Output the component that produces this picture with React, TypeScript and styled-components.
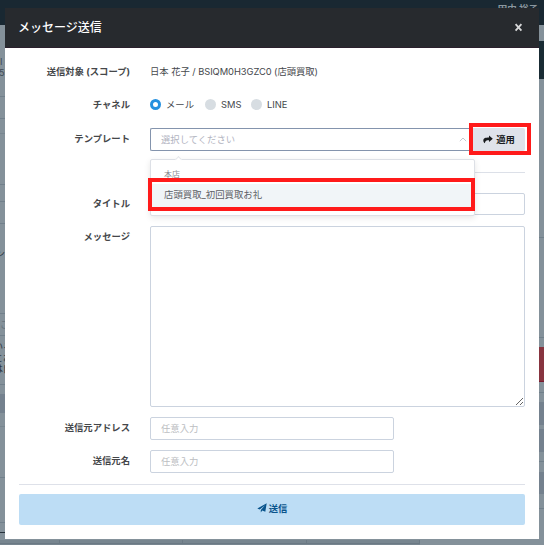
import React from 'react';
import styled, { createGlobalStyle, css } from 'styled-components';

const GlobalStyle = createGlobalStyle`
  *, *::before, *::after { box-sizing: border-box; }
  body {
    margin: 0;
    overflow: hidden;
    font-family: Inter, "Noto Sans CJK JP", sans-serif;
    font-size: 9.33px;
    color: #45484c;
  }
  input, textarea, button { font: inherit; color: inherit; margin: 0; }
`;

const Page = styled.div`
  position: relative;
  height: 545px;
  overflow: hidden;
  background: #84919a;
`;

const TopBar = styled.div`
  height: 25px;
  padding: 2px 6px 0 0;
  background: #192832;
  color: #8b979f;
  font-size: 9.5px;
  font-weight: 700;
  line-height: 14px;
  text-align: right;
`;

const Backdrop = styled.div`
  display: flex;
  justify-content: space-between;
  height: 515px;
`;

const Strip = styled.div`
  width: 6px;
`;

const Band = styled.div<{ $h: number; $bg?: string; $line?: string }>`
  height: ${(p) => p.$h}px;
  background: ${(p) => p.$bg || 'transparent'};
  border-bottom: ${(p) => (p.$line ? `1px solid ${p.$line}` : '0')};
`;

const Snippet = styled.div<{ $top: number; $color?: string; $shift?: number }>`
  padding-top: ${(p) => p.$top}px;
  margin-left: ${(p) => p.$shift || 0}px;
  color: ${(p) => p.$color || '#3e4a54'};
  font-size: 9px;
  line-height: 11px;
  white-space: nowrap;
`;

const TableEdge = styled.div`
  display: grid;
  grid-template-columns: 60px 123px 124px 113px;
  width: 420px;
  height: 5px;
  background: #77858f;
`;

const TableCell = styled.div`
  height: 4px;
  border-right: 1px solid #6b7984;
  border-bottom: 1px solid #6b7984;
`;

const Dialog = styled.section`
  position: absolute;
  left: 5px;
  top: 8px;
  width: 534px;
  height: 531px;
  background: #fff;
`;

const Header = styled.header`
  display: flex;
  align-items: center;
  justify-content: space-between;
  height: 40px;
  padding: 0 16px 0 13px;
  background: #272a2e;
  border-bottom: 1px solid #2b202d;
`;

const Title = styled.h1`
  margin: 0;
  color: #fff;
  font-size: 12px;
  font-weight: 500;
  line-height: 18px;
`;

const CloseButton = styled.button`
  display: flex;
  padding: 0 0 1px;
  border: 0;
  background: none;
  color: #d7d8d9;
`;

const Form = styled.form`
  padding: 12px 14px 0 0;
`;

const Row = styled.div<{ $h?: number; $gap?: number }>`
  display: grid;
  grid-template-columns: 125px 375px;
  column-gap: 20px;
  height: ${(p) => p.$h || 23}px;
  margin-bottom: ${(p) => p.$gap ?? 10}px;
`;

const Label = styled.label<{ $line?: number }>`
  height: 23px;
  line-height: ${(p) => p.$line || 22}px;
  font-weight: 700;
  color: #45474a;
  text-align: right;
  white-space: nowrap;
`;

const Value = styled.div`
  line-height: 24px;
  letter-spacing: -0.05px;
`;

const fieldFrame = css`
  display: block;
  border: 1px solid #cbd3df;
  border-radius: 2px;
  background: #fff;
  outline: 0;
`;

const TextField = styled.input<{ $w: number; $h?: number }>`
  ${fieldFrame}
  width: ${(p) => p.$w}px;
  height: ${(p) => p.$h || 23}px;
  padding: 0 10px;
  &::placeholder { color: #bcbec2; opacity: 1; }
`;

const MessageField = styled.textarea`
  ${fieldFrame}
  width: 375px;
  height: 181px;
  resize: vertical;
`;

const RadioGroup = styled.div`
  display: flex;
  align-items: center;
  height: 23px;
`;

const RadioOption = styled.span<{ $w: number }>`
  display: flex;
  align-items: center;
  gap: 5px;
  width: ${(p) => p.$w}px;
  line-height: 20px;
  white-space: nowrap;
`;

const RadioMark = styled.span<{ $checked?: boolean }>`
  flex: none;
  width: 11px;
  height: 11px;
  border-radius: 50%;
  border: ${(p) => (p.$checked ? '3.5px solid #2490df' : '0')};
  background: ${(p) => (p.$checked ? '#fff' : '#d7dde2')};
`;

const SelectGroup = styled.div`
  position: relative;
  display: flex;
`;

const SelectBox = styled.div`
  display: flex;
  align-items: center;
  justify-content: space-between;
  width: 323px;
  height: 23px;
  padding: 0 6px 1px 10px;
  border: 1px solid #8494ad;
  border-right: 0;
  border-radius: 2px 0 0 2px;
  color: #b2b4bf;
`;

const ApplyButton = styled.button`
  display: flex;
  align-items: center;
  justify-content: center;
  gap: 3px;
  width: 52px;
  height: 23px;
  padding: 0 0 1px;
  border: 0;
  border-radius: 0 2px 2px 0;
  background: #dfe2ea;
  color: #181a1d;
  font-weight: 700;
`;

const Menu = styled.div`
  position: absolute;
  z-index: 2;
  top: 31px;
  left: 0;
  width: 325px;
  height: 57px;
  padding-top: 8px;
  border: 1px solid #dde0e6;
  border-radius: 2px;
  background: #fff;
  box-shadow: 0 2px 6px rgba(0, 0, 0, 0.1);
  &::before {
    content: '';
    position: absolute;
    top: -3px;
    left: 25px;
    width: 5px;
    height: 5px;
    border: solid #e6e8ec;
    border-width: 1px 0 0 1px;
    background: #fff;
    transform: rotate(45deg);
  }
`;

const MenuGroup = styled.div`
  height: 16px;
  padding-left: 13px;
  color: #888a90;
  font-size: 8px;
  line-height: 12px;
`;

const MenuItem = styled.div`
  height: 23px;
  padding-left: 13px;
  background: #f1f5f8;
  color: #5d6065;
  font-size: 9.4px;
  line-height: 22px;
`;

const Highlight = styled.div<{ $x: number; $y: number; $w: number; $h: number }>`
  position: absolute;
  z-index: 3;
  left: ${(p) => p.$x}px;
  top: ${(p) => p.$y}px;
  width: ${(p) => p.$w}px;
  height: ${(p) => p.$h}px;
  border: 4px solid #ff1a1a;
  pointer-events: none;
`;

const Divider = styled.hr`
  height: 1px;
  margin: 21px 0 20px 145px;
  border: 0;
  background: #dce0e8;
`;

const Footer = styled.footer`
  margin: 11px 14px 0;
  padding-top: 9px;
  border-top: 1px solid #dee1e9;
`;

const SendButton = styled.button`
  display: flex;
  align-items: center;
  justify-content: center;
  gap: 2px;
  width: 100%;
  height: 31px;
  padding: 0 0 3px;
  border: 0;
  border-radius: 2px;
  background: #bdddf5;
  color: #09548c;
  font-weight: 700;
`;

const LINE = '#71808b';

export default function App() {
  return (
    <>
      <GlobalStyle />
      <Page>
        <TopBar>田中 裕子</TopBar>
        <Backdrop>
          <Strip>
            <Band $h={72} $line={LINE}>
              <Snippet $top={31}>I</Snippet>
              <Snippet $top={0} $shift={-1}>59</Snippet>
            </Band>
            <Band $h={22} $line={LINE} />
            <Band $h={15} $line="#788690" />
            <Band $h={51} $line={LINE} />
            <Band $h={17} $line={LINE} />
            <Band $h={22} $line={LINE} />
            <Band $h={90} $line={LINE}>
              <Snippet $top={24} $shift={-4} $color="#27343e">ン</Snippet>
            </Band>
            <Band $h={22} $line={LINE}>
              <Snippet $top={5} $color="#65727c">こ</Snippet>
            </Band>
            <Band $h={49} $line={LINE}>
              <Snippet $top={5} $shift={-6} $color="#27343e">いる</Snippet>
              <Snippet $top={0} $shift={-6} $color="#27343e">とお</Snippet>
              <Snippet $top={0} $shift={-6} $color="#27343e">は自</Snippet>
            </Band>
            <Band $h={9} />
            <Band $h={19} $bg="#74818e" />
            <Band $h={14} $line="#788690" />
            <Band $h={51} $line={LINE} />
            <Band $h={45} $line={LINE} />
            <Band $h={10} $line="#26323b" />
            <Band $h={7} />
          </Strip>
          <Strip>
            <Band $h={16} />
            <Band $h={38} $bg="#192b34" />
            <Band $h={159} $line={LINE} />
            <Band $h={100} $line={LINE} />
            <Band $h={9} />
            <Band $h={35} $bg="#87343f" $line="#781c30" />
            <Band $h={11} $line={LINE} />
            <Band $h={9} />
            <Band $h={23} $bg="#74818e" />
            <Band $h={4} />
            <Band $h={23} $bg="#74818e" />
            <Band $h={10} $line={LINE} />
            <Band $h={10} />
            <Band $h={22} $bg="#74818e" />
            <Band $h={15} $line={LINE} />
          </Strip>
        </Backdrop>
        <TableEdge>
          <TableCell />
          <TableCell />
          <TableCell />
          <TableCell />
        </TableEdge>

        <Dialog role="dialog">
          <Header>
            <Title>メッセージ送信</Title>
            <CloseButton type="button" aria-label="閉じる">
              <svg width="9" height="9" viewBox="0 0 9 9" fill="none" stroke="currentColor" strokeWidth="1.8">
                <path d="M1.6 1.2 7.4 7.6M7.4 1.2 1.6 7.6" />
              </svg>
            </CloseButton>
          </Header>
          <Form onSubmit={(e) => e.preventDefault()}>
            <Row $gap={10}>
              <Label $line={24}>送信対象 (スコープ)</Label>
              <Value>日本 花子 / BSIQM0H3GZC0 (店頭買取)</Value>
            </Row>
            <Row $gap={12}>
              <Label $line={24}>チャネル</Label>
              <RadioGroup>
                <RadioOption $w={55}><RadioMark $checked />メール</RadioOption>
                <RadioOption $w={46}><RadioMark />SMS</RadioOption>
                <RadioOption $w={40}><RadioMark />LINE</RadioOption>
              </RadioGroup>
            </Row>
            <Row $gap={0}>
              <Label>テンプレート</Label>
              <SelectGroup>
                <SelectBox>
                  選択してください
                  <svg width="8" height="5" viewBox="0 0 8 5" fill="none" stroke="#c5c8cf">
                    <path d="M.8 4.2 4 1l3.200 3.200" />
                  </svg>
                </SelectBox>
                <ApplyButton type="button">
                  <svg width="10" height="9" viewBox="0 0 10 9" fill="currentColor">
                    <path d="M6 .6 9.800 3.800 6 7V5.200C3.600 5.200 2.200 5.700 1.800 8.300.9 7.600.3 6.700.3 5.500.3 3 2.600 2.400 6 2.400Z" />
                  </svg>
                  適用
                </ApplyButton>
                <Menu>
                  <MenuGroup>本店</MenuGroup>
                  <MenuItem>店頭買取_初回買取お礼</MenuItem>
                </Menu>
                <Highlight $x={-2} $y={50} $w={327} $h={33} />
                <Highlight $x={319} $y={-5} $w={62} $h={32} />
              </SelectGroup>
            </Row>
            <Divider />
            <Row $h={22} $gap={11}>
              <Label>タイトル</Label>
              <TextField $w={375} $h={22} />
            </Row>
            <Row $h={181}>
              <Label>メッセージ</Label>
              <MessageField />
            </Row>
            <Row>
              <Label>送信元アドレス</Label>
              <TextField $w={244} placeholder="任意入力" />
            </Row>
            <Row $gap={0}>
              <Label>送信元名</Label>
              <TextField $w={244} placeholder="任意入力" />
            </Row>
          </Form>
          <Footer>
            <SendButton type="button">
              <svg width="10" height="10" viewBox="0 0 10 10" fill="currentColor">
                <path d="M9.700.3 8.300 8.700 5.200 7.500 3.800 9.500V7L8 2.200 2.700 6.500.3 5.500Z" />
              </svg>
              送信
            </SendButton>
          </Footer>
        </Dialog>
      </Page>
    </>
  );
}
